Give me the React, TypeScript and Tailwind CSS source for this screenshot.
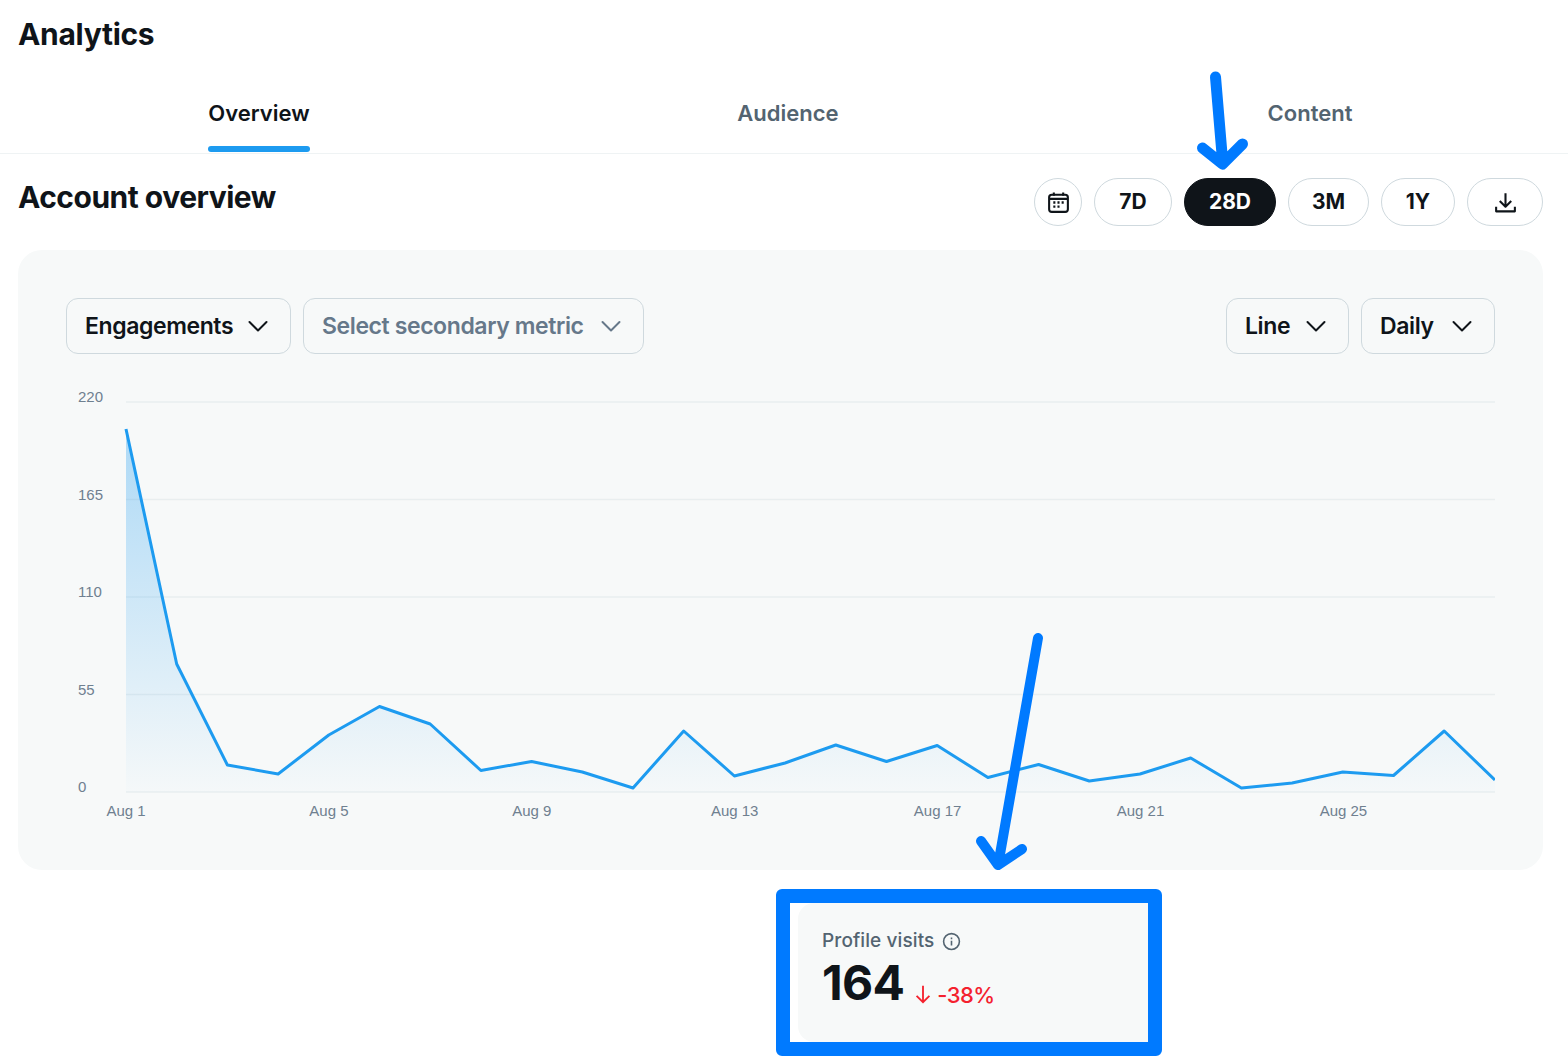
import { ReactNode } from "react";

const points = [
  429, 664, 765, 774, 735, 706.5, 724, 770.5, 761.5, 772, 788, 731, 776, 763,
  745, 761.5, 745.5, 777.5, 764.5, 781, 774, 758, 788, 783, 772, 775.5, 731,
  780,
];
const yTicks = [
  { label: "220", y: 402, labelY: 402 },
  { label: "165", y: 499.5, labelY: 500 },
  { label: "110", y: 597, labelY: 597 },
  { label: "55", y: 694.5, labelY: 695 },
  { label: "0", y: 792, labelY: 792 },
];
const xTicks = ["Aug 1", "Aug 5", "Aug 9", "Aug 13", "Aug 17", "Aug 21", "Aug 25"];

function Chevron({ className }: { className: string }) {
  return (
    <svg viewBox="0 0 24 24" className={className} fill="none" stroke="currentColor" strokeWidth="2">
      <path d="M3.5 8l8.5 8.500L20.500 8" strokeLinecap="round" strokeLinejoin="round" />
    </svg>
  );
}

function Dropdown({ label, muted, className }: { label: string; muted?: boolean; className: string }) {
  return (
    <button
      className={`flex h-14 items-center justify-between rounded-xl border border-[#cfd9de] pl-[18px] pr-[20px] text-[23px] font-semibold tracking-[-0.4px] ${
        muted ? "text-[#66788a]" : "text-[#0f1419]"
      } ${className}`}
    >
      <span>{label}</span>
      <Chevron className="h-6 w-6" />
    </button>
  );
}

function Pill({ children, active, className }: { children: ReactNode; active?: boolean; className: string }) {
  return (
    <button
      className={`flex h-12 items-center justify-center rounded-full border text-[21px] font-bold ${
        active ? "border-[#0f1419] bg-[#0f1419] text-white" : "border-[#cfd9de] bg-white text-[#0f1419]"
      } ${className}`}
    >
      {children}
    </button>
  );
}

function Tab({ label, active }: { label: string; active?: boolean }) {
  return (
    <div className="flex flex-col items-center pt-[30px]">
      <div className={`inline-flex flex-col text-[22px] leading-[30px] font-semibold ${active ? "text-[#0f1419]" : "text-[#536471]"}`}>
        <span>{label}</span>
        <div className={`mt-[18px] h-[6px] rounded-full ${active ? "bg-[#1d9bf0]" : "bg-transparent"}`} />
      </div>
    </div>
  );
}

function EngagementChart() {
  const coords = points.map((y, i) => `${126 + i * 50.7},${y}`);
  const area = `126,792 ${coords.join(" ")} 1495,792`;
  return (
    <svg viewBox="66 380 1429 442" className="mt-[26px] block h-[442px] w-[1429px]">
      <defs>
        <linearGradient id="fill" x1="0" y1="0" x2="0" y2="1">
          <stop offset="0" stopColor="#1d9bf0" stopOpacity="0.34" />
          <stop offset="1" stopColor="#1d9bf0" stopOpacity="0.01" />
        </linearGradient>
      </defs>
      {yTicks.map((t) => (
        <g key={t.label}>
          <line x1="126" x2="1495" y1={t.y} y2={t.y} stroke="#e9eeef" strokeWidth="1.5" />
          <text x="78" y={t.labelY - 4} dominantBaseline="middle" fill="#6f8090" fontSize="15" fontFamily="Liberation Sans, sans-serif">
            {t.label}
          </text>
        </g>
      ))}
      {xTicks.map((label, i) => (
        <text key={label} x={126 + i * 202.9} y="816" textAnchor="middle" fill="#6f8090" fontSize="15" fontFamily="Liberation Sans, sans-serif">
          {label}
        </text>
      ))}
      <polygon points={area} fill="url(#fill)" />
      <polyline points={coords.join(" ")} fill="none" stroke="#1d9bf0" strokeWidth="3" strokeLinejoin="round" />
    </svg>
  );
}

export default function App() {
  return (
    <div className="relative h-[1064px] w-[1568px] overflow-hidden bg-white [font-family:Inter,sans-serif]">
      <h1 className="h-[68px] pl-[18px] text-[30px] leading-[68px] font-bold tracking-[-0.3px] text-[#0f1419]">Analytics</h1>
      <div className="grid h-[86px] grid-cols-[518px_540px_504px] border-b border-[#eff3f4]">
        <Tab label="Overview" active />
        <Tab label="Audience" />
        <Tab label="Content" />
      </div>

      <div className="flex items-start justify-between pr-[25px] pl-[18px] pt-6">
        <h2 className="text-[30px] leading-[38px] font-bold tracking-[-0.5px] text-[#0f1419]">Account overview</h2>
        <div className="flex gap-3">
          <Pill className="w-12">
            <svg viewBox="0 0 24 24" className="h-[25px] w-[25px]" fill="none" stroke="#0f1419" strokeWidth="2">
              <rect x="3" y="4.500" width="18" height="16.500" rx="2.500" />
              <path d="M3 8.500h18M7.500 2.500v3M16.500 2.500v3" />
              <path d="M7 12h2M11 12h2M15 12h2M7 16h2M11 16h2" strokeWidth="2.200" />
            </svg>
          </Pill>
          <Pill className="w-[78px]">7D</Pill>
          <Pill active className="w-[92px]">28D</Pill>
          <Pill className="w-[81px]">3M</Pill>
          <Pill className="w-[74px]">1Y</Pill>
          <Pill className="w-[76px]">
            <svg viewBox="0 0 24 24" className="h-[25px] w-[25px]" fill="none" stroke="#0f1419" strokeWidth="2">
              <path d="M12 3v13M6.500 10.500L12 16l5.500-5.500M3 16v4.500h18V16" strokeLinejoin="round" />
            </svg>
          </Pill>
        </div>
      </div>

      <div className="mt-6 ml-[18px] h-[620px] w-[1525px] rounded-3xl bg-[#f7f9f9] px-12 py-12">
        <div className="flex justify-between">
          <div className="flex gap-3">
            <Dropdown label="Engagements" className="w-[225px]" />
            <Dropdown label="Select secondary metric" muted className="w-[341px]" />
          </div>
          <div className="flex gap-3">
            <Dropdown label="Line" className="w-[123px]" />
            <Dropdown label="Daily" className="w-[134px]" />
          </div>
        </div>
        <EngagementChart />
      </div>

      <div className="mt-[19px] ml-[776px] h-[167px] w-[386px] rounded-[6px] border-[14px] border-[#007aff] bg-white pl-2">
        <div className="h-full rounded-l-2xl bg-[#f7f9f9] pt-[26px] pl-6">
          <div className="flex items-center gap-2 text-[19px] leading-6 font-medium tracking-[0.1px] text-[#536471]">
            <span>Profile visits</span>
            <svg viewBox="0 0 24 24" className="h-[19px] w-[19px]" fill="none" stroke="#536471" strokeWidth="2">
              <circle cx="12" cy="12" r="10" />
              <path d="M12 11v6M12 7v2" />
            </svg>
          </div>
          <div className="mt-[2px] flex items-end">
            <span className="text-[48px] leading-[56px] font-bold tracking-[-0.7px] text-[#0f1419]">164</span>
            <svg viewBox="0 0 24 24" className="mb-[6px] ml-[8px] h-[22px] w-[22px]" fill="none" stroke="#f4212e" strokeWidth="2">
              <path d="M12 3v18M5 14l7 7 7-7" />
            </svg>
            <span className="mb-[2px] ml-[3px] text-[22px] leading-7 font-medium tracking-[-0.5px] text-[#f4212e]">-38%</span>
          </div>
        </div>
      </div>

      <svg viewBox="0 0 1568 1064" className="pointer-events-none absolute inset-0 h-[1064px] w-[1568px]" fill="none" stroke="#007aff" strokeLinecap="round" strokeLinejoin="round" strokeWidth="11">
        <path d="M1215.500 77L1222.500 160M1202.500 148L1222.500 164L1242.500 144" />
        <path d="M1038 638L999 860M981 841L998 865L1022 849" strokeWidth="10" />
      </svg>
    </div>
  );
}
